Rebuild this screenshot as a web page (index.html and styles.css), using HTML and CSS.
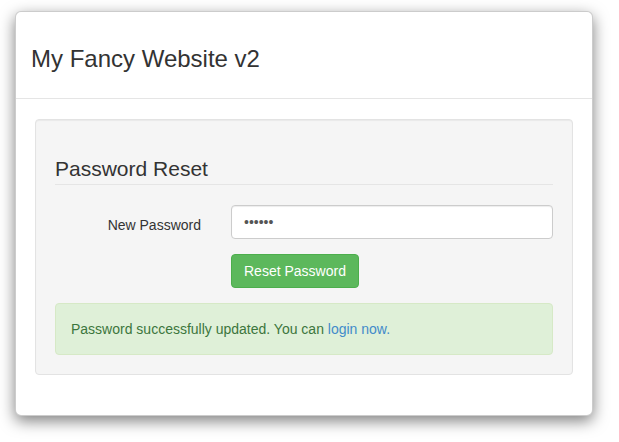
FILE: index.html
```html
<!DOCTYPE html>
<html>
<head>
<meta charset="utf-8">
<title>Password Reset</title>
<link rel="stylesheet" href="styles.css">
</head>
<body>
<div class="page">
  <div class="modal">
    <div class="modal-header">
      <h3 class="modal-title">My Fancy Website v2</h3>
    </div>
    <div class="modal-body">
      <div class="well">
        <div class="legend">Password Reset</div>
        <div class="form-row">
          <label class="control-label">New Password</label>
          <div class="control">
            <input class="form-control" type="password" value="123456">
          </div>
        </div>
        <div class="form-row">
          <div class="offset"></div>
          <div class="control">
            <button class="btn-success">Reset Password</button>
          </div>
        </div>
        <div class="alert-success">Password successfully updated. You can <a href="#">login now.</a></div>
      </div>
    </div>
  </div>
</div>
</body>
</html>
```

FILE: styles.css
```css
html, body {
  margin: 0;
  padding: 0;
  background: #fff;
}
body {
  font-family: "Liberation Sans", Arial, sans-serif;
  font-size: 14px;
  line-height: 20px;
  color: #333;
}
.page {
  min-height: 442px;
  padding: 11px 0 0 15px;
  box-sizing: border-box;
}
.modal {
  width: 578px;
  box-sizing: border-box;
  border: 1px solid rgba(0, 0, 0, 0.2);
  border-radius: 6px;
  background: #fff;
  box-shadow: 0 5px 15px rgba(0, 0, 0, 0.5);
}
.modal-header {
  padding: 34px 15px 26px;
  border-bottom: 1px solid #e5e5e5;
}
.modal-title {
  margin: 0;
  font-size: 24px;
  line-height: 26px;
  font-weight: 500;
  color: #333;
}
.modal-body {
  padding: 20px 19px;
}
.well {
  margin-bottom: 20px;
  padding: 19px;
  background: #f5f5f5;
  border: 1px solid #e3e3e3;
  border-radius: 4px;
  box-shadow: inset 0 1px 1px rgba(0, 0, 0, 0.05);
}
.legend {
  margin-top: 15px;
  margin-bottom: 20px;
  font-size: 21px;
  line-height: 30px;
  color: #333;
  border-bottom: 1px solid #e5e5e5;
}
.form-row {
  display: flex;
  margin-bottom: 15px;
}
.control-label,
.offset {
  flex: none;
  width: 176px;
  box-sizing: border-box;
}
.control-label {
  text-align: right;
  padding-top: 10px;
  padding-right: 30px;
}
.control {
  flex: 1;
}
.form-control {
  display: block;
  width: 100%;
  height: 34px;
  box-sizing: border-box;
  padding: 6px 12px;
  font-family: "Liberation Sans", Arial, sans-serif;
  font-size: 14px;
  line-height: 20px;
  color: #555;
  background: #fff;
  border: 1px solid #ccc;
  border-radius: 4px;
  box-shadow: inset 0 1px 1px rgba(0, 0, 0, 0.075);
  outline: none;
}
.btn-success {
  display: inline-block;
  padding: 6px 12px;
  font-family: "Liberation Sans", Arial, sans-serif;
  font-size: 14px;
  line-height: 20px;
  color: #fff;
  background: #5cb85c;
  border: 1px solid #4cae4c;
  border-radius: 4px;
  cursor: pointer;
}
.alert-success {
  padding: 15px;
  background: #dff0d8;
  border: 1px solid #d6e9c6;
  border-radius: 4px;
  color: #3c763d;
}
.alert-success a {
  color: #428bca;
  text-decoration: none;
}
```
